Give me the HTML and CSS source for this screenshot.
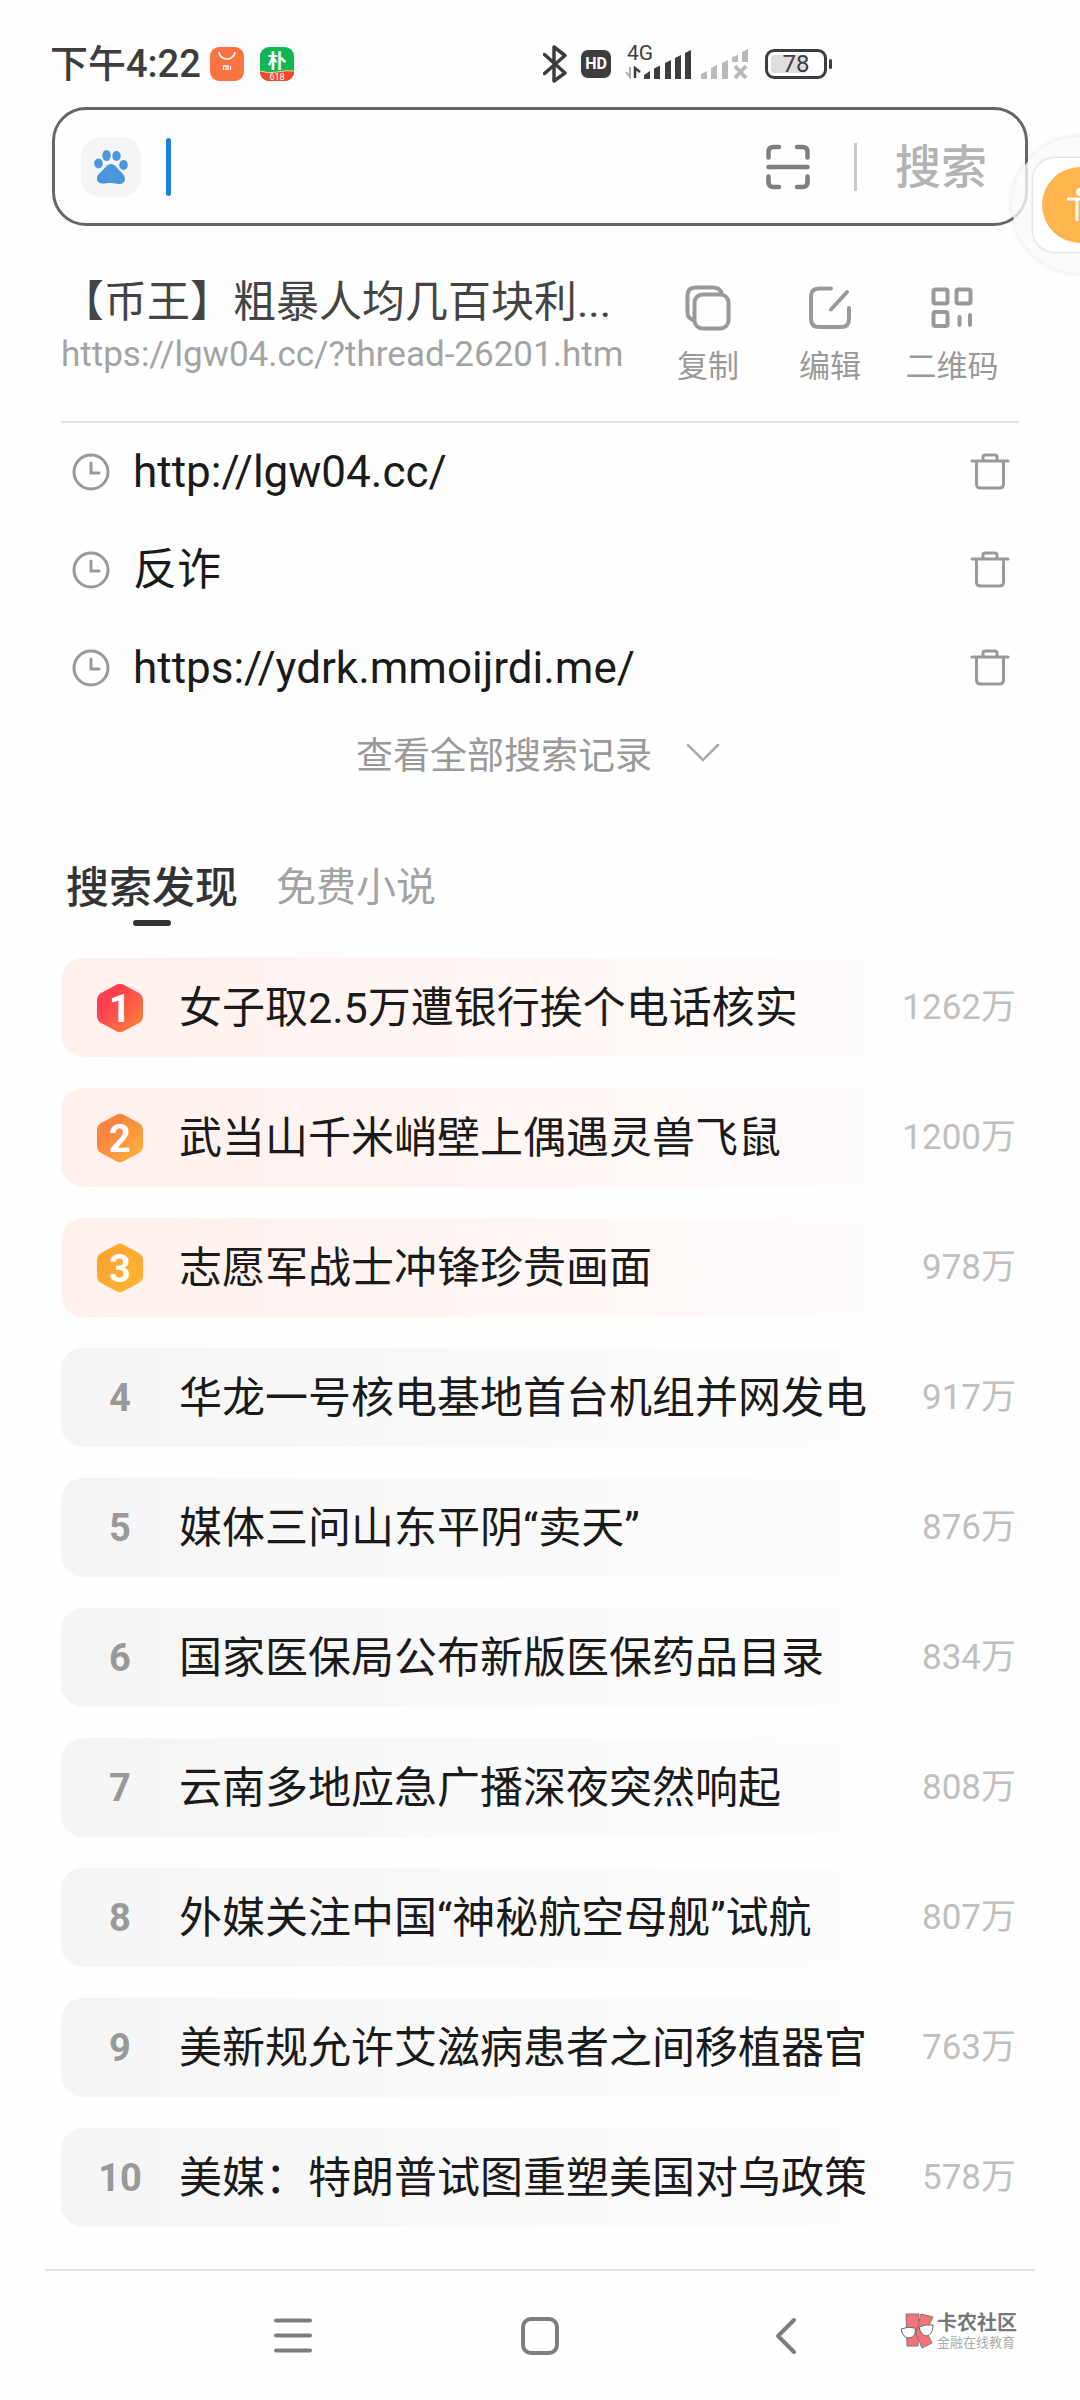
FILE: index.html
```html
<!DOCTYPE html>
<html lang="zh-CN">
<head>
  <meta charset="UTF-8" />
  <meta name="viewport" content="width=device-width, initial-scale=1.0"/>
  <title>搜索</title>
  <link rel="stylesheet" href="styles.css">
</head>
<body>
  <header class="status-bar">
    <span class="clock">下午4:22</span>
    <svg class="app-icon" viewBox="0 0 34 34">
      <rect width="34" height="34" rx="9" fill="#fb7340"/>
      <path d="M9 5a8 7 0 0 0 16 0" fill="none" stroke="#fff" stroke-width="1.6"/>
      <path d="M13.500 23v-4h4.500v4M16 20.500v2.500M20.500 19v4" fill="none" stroke="#fff" stroke-width="1.300"/>
    </svg>
    <svg class="app-icon" viewBox="0 0 34 34">
      <defs><clipPath id="appClip"><rect width="34" height="34" rx="9"/></clipPath></defs>
      <g clip-path="url(#appClip)">
        <rect width="34" height="34" fill="#0fb653"/>
        <path d="M0 24q8 3 17 1t17-1v10H0z" fill="#ee4a2b"/>
        <path d="M0 24q8 3 17 1t17-1" fill="none" stroke="#ffd98a" stroke-width="1"/>
      </g>
      <text class="app-char" x="17" y="21">朴</text>
      <text class="app-tag" x="17" y="33">618</text>
    </svg>
    <div class="status-icons">
      <svg width="24" height="38" viewBox="0 0 24 38">
        <path d="M1.500 9.500 22 28 11 36V2l11 8.500L1.500 28.500" fill="none" stroke="#3d3d3d" stroke-width="3.500" stroke-linejoin="round" stroke-linecap="round"/>
      </svg>
      <span class="hd">HD</span>
      <div class="signal">
        <span class="network">4G</span>
        <svg width="66" height="30" viewBox="0 0 66 30">
          <path d="M5 18v10L1 23" fill="none" stroke="#aaa" stroke-width="2"/>
          <path d="M10 29V19l5 4" fill="none" stroke="#3d3d3d" stroke-width="2.500"/>
          <path fill="#3d3d3d" d="M19 30v-4l6-4v8zM29 30V19.500l6-3V30zM40 30V14l6-3v19zM50 30V9l6-3v24zM60 30V4l6-3v29z"/>
        </svg>
      </div>
      <svg width="48" height="30" viewBox="0 0 48 30">
        <path fill="#b9b9b9" d="M0 30v-5l6-3v8zM10 30V19l6-3v14zM21 30V14l6-3v19zM31 13V8l6-2v7zM41 13V3l6-3v13z"/>
        <path d="M34 17l11 12M45 17 34 29" stroke="#b9b9b9" stroke-width="4"/>
      </svg>
      <div class="battery"><span>78</span></div>
    </div>
  </header>

  <main>
    <form class="search-box">
      <button type="button" class="engine" aria-label="百度">
        <svg width="34" height="34" viewBox="0 0 34 34" fill="#4a97db">
          <ellipse cx="4.500" cy="13.500" rx="4.300" ry="5"/>
          <ellipse cx="12.500" cy="5.500" rx="4.200" ry="5.500"/>
          <ellipse cx="22.500" cy="6" rx="4.200" ry="5"/>
          <ellipse cx="29.500" cy="15" rx="4.300" ry="5"/>
          <path d="M17 14c4 0 6 4 9 7 3 2.500 5 5 5 8s-2.500 5-6 5c-3 0-5-1-8-1s-5 .6-8 .6c-4 0-6-2-6-5.200 0-3 2-5 5-7.400C11 18 13 14 17 14z"/>
        </svg>
      </button>
      <span class="caret"></span>
      <input type="text" id="keyword" aria-label="搜索内容" />
      <button type="button" class="scan" aria-label="扫一扫">
        <svg width="44" height="46" viewBox="0 0 44 46" fill="none" stroke="#7d7d7d" stroke-width="4.500" stroke-linecap="round">
          <path d="M2.500 13.500V8q0-5 5-5H13M31 3h5.500q5 0 5 5v5.500M41.500 32.500V38q0 5-5 5H31M13 43H7.500q-5 0-5-5v-5.500M2.500 23h39"/>
        </svg>
      </button>
      <span class="separator"></span>
      <button type="submit" class="search-btn">搜索</button>
    </form>

    <section class="clip">
      <div class="clip-text">
        <div class="clip-title">【币王】粗暴人均几百块利...</div>
        <a class="clip-url" href="#">https://lgw04.cc/?thread-26201.htm</a>
      </div>
      <div class="clip-actions">
        <button type="button">
          <svg viewBox="0 0 46 46"><rect x="9.500" y="9.500" width="34" height="34" rx="8"/><path d="M8 35q-5.500-2-5.500-7.500V10.500q0-8 8-8H28q6 0 8.500 5"/></svg>
          复制
        </button>
        <button type="button">
          <svg viewBox="0 0 46 46"><path d="M24 3.500H12q-8 0-8 8V34q0 8 8 8h22q8 0 8-8V23M24 24.500 40 7"/></svg>
          编辑
        </button>
        <button type="button">
          <svg viewBox="0 0 46 46"><rect x="4.500" y="4.500" width="14" height="14" rx="2"/><rect x="27.500" y="4.500" width="14" height="14" rx="2"/><rect x="4.500" y="27" width="14" height="14" rx="2"/><path d="M30.500 32v8M41 30v10"/></svg>
          二维码
        </button>
      </div>
    </section>

    <ul class="history" id="history"></ul>

    <button type="button" class="show-all">
      查看全部搜索记录
      <svg width="34" height="20" viewBox="0 0 34 20" fill="none" stroke="#aaa" stroke-width="2.500" stroke-linecap="round"><path d="M2 2l15 15L32 2"/></svg>
    </button>

    <nav class="tabs">
      <a href="#" class="tab active">搜索发现</a>
      <a href="#" class="tab">免费小说</a>
    </nav>

    <ol class="hot-list" id="hotList"></ol>
  </main>

  <footer class="nav-bar">
    <button type="button" aria-label="菜单">
      <svg width="38" height="38" viewBox="0 0 38 38"><path d="M2 3.500h34M2 18.500h34M2 33.500h34"/></svg>
    </button>
    <button type="button" aria-label="主页">
      <svg width="38" height="38" viewBox="0 0 38 38"><rect x="2" y="2" width="34" height="34" rx="8"/></svg>
    </button>
    <button type="button" aria-label="返回">
      <svg width="38" height="38" viewBox="0 0 38 38"><path d="M26 3 10 19l16 16"/></svg>
    </button>
    <div class="watermark">
      <svg width="36" height="36" viewBox="0 0 36 36">
        <g fill="#f8727c" stroke="#777" stroke-width="1">
          <path d="M6 1h13l-1 32H7z"/>
          <path d="M21 1l12 3-7 14 6 12-10 5-6-15z"/>
        </g>
        <g fill="#fff" stroke="#666" stroke-width="1">
          <path d="M1 16q7-3 14-1 2 9-6 10-6 0-8-9z"/>
          <path d="M19 14q6-3 14-2 0 9-6 11-6 0-8-9z"/>
        </g>
      </svg>
      <div>
        <div class="wm-name">卡农社区</div>
        <div class="wm-sub">金融在线教育</div>
      </div>
    </div>
  </footer>

  <div class="float-dock">
    <button type="button" class="float-btn" aria-label="无障碍">
      <span class="float-card">
        <svg width="78" height="78" viewBox="0 0 78 78">
          <circle cx="39" cy="39" r="38" fill="#ffb44d"/>
          <circle cx="39" cy="26" r="4" fill="#fff"/>
          <path d="M26 33h26M36 33v22M42 33v22" fill="none" stroke="#fff" stroke-width="3"/>
        </svg>
      </span>
    </button>
  </div>

  <script>
    const history = ['http://lgw04.cc/', '反诈', 'https://ydrk.mmoijrdi.me/'];
    const hot = [
      ['女子取2.5万遭银行挨个电话核实', '1262万'],
      ['武当山千米峭壁上偶遇灵兽飞鼠', '1200万'],
      ['志愿军战士冲锋珍贵画面', '978万'],
      ['华龙一号核电基地首台机组并网发电', '917万'],
      ['媒体三问山东平阴“卖天”', '876万'],
      ['国家医保局公布新版医保药品目录', '834万'],
      ['云南多地应急广播深夜突然响起', '808万'],
      ['外媒关注中国“神秘航空母舰”试航', '807万'],
      ['美新规允许艾滋病患者之间移植器官', '763万'],
      ['美媒：特朗普试图重塑美国对乌政策', '578万']
    ];
    const badgeColors = [['#ff3f4d', '#f88a3c'], ['#f9853f', '#fcb43c'], ['#fda52f', '#fdb935']];

    document.getElementById('history').innerHTML = history.map(text => `
      <li>
        <svg width="38" height="38" viewBox="0 0 38 38"><circle cx="19" cy="19" r="17"/><path d="M19 10v10h8"/></svg>
        <a href="#">${text}</a>
        <button type="button" aria-label="删除">
          <svg width="40" height="38" viewBox="0 0 40 38"><path d="M2 8h36M13 7V4q0-2 2-2h10q2 0 2 2v3M6.500 9v22q0 4 4 4h19q4 0 4-4V9"/></svg>
        </button>
      </li>`).join('');

    document.getElementById('hotList').innerHTML = hot.map(([title, heat], i) => {
      const rank = i < 3
        ? `<svg class="rank" width="46" height="50" viewBox="0 0 46 50">
            <defs><linearGradient id="g${i}" x1="0" y1="0" x2="1" y2="1"><stop offset="0.3" stop-color="${badgeColors[i][0]}"/><stop offset="1" stop-color="${badgeColors[i][1]}"/></linearGradient></defs>
            <path d="M19 2q4-2.500 8 0l15 8q4 2.500 4 7v16q0 4.500-4 7l-15 8q-4 2.500-8 0L4 40q-4-2.500-4-7V17q0-4.500 4-7z" fill="url(#g${i})"/>
            <text x="23" y="39">${i + 1}</text>
          </svg>`
        : `<span class="rank">${i + 1}</span>`;
      return `<li class="${i < 3 ? 'top' : ''}">${rank}<a href="#">${title}</a><span class="heat">${heat}</span></li>`;
    }).join('');
  </script>
</body>
</html>
```

FILE: styles.css
```css
:root {
  --dark: #3d3d3d;
  --text: #1a1a1a;
  --gray: #999;
  --light-gray: #bfbfbf;
  --line: #e6e6e6;
}

* {
  box-sizing: border-box;
}

body {
  margin: 0;
  position: relative;
  background: #fefefe;
  color: var(--text);
  font-family: Roboto, "Noto Sans CJK SC", sans-serif;
  font-size: 43px;
}

button {
  border: none;
  padding: 0;
  background: none;
  font-family: inherit;
  cursor: pointer;
}

a {
  color: inherit;
  text-decoration: none;
}

svg {
  display: block;
  flex: none;
}

ul, ol {
  list-style: none;
  margin: 0;
  padding: 0;
}

/* status bar */
.status-bar {
  display: flex;
  align-items: center;
  height: 107px;
  padding: 20px 52px 0 50px;
  color: var(--dark);
}

.clock {
  font-size: 38px;
  font-weight: 500;
  line-height: 48px;
  margin-right: 9px;
}

.app-icon {
  width: 34px;
  height: 34px;
  margin-right: 16px;
}

.app-icon text {
  fill: #fff;
  text-anchor: middle;
}

.app-char {
  font-size: 19px;
  font-weight: 700;
}

.app-tag {
  font-size: 9px;
}

.status-icons {
  display: flex;
  align-items: center;
  margin-left: auto;
  margin-right: 201px;
}

.hd {
  width: 30px;
  height: 28px;
  margin: 0 14px;
  border-radius: 7px;
  background: var(--dark);
  color: #fff;
  font: 700 16px/28px Roboto, sans-serif;
  text-align: center;
}

.signal {
  position: relative;
  margin-right: 10px;
}

.network {
  position: absolute;
  left: 2px;
  top: -6px;
  font-size: 21px;
  line-height: 20px;
}

.battery {
  position: relative;
  width: 62px;
  height: 30px;
  margin-left: 16px;
  border: 3px solid var(--dark);
  border-radius: 9px;
  background: linear-gradient(to right, #dedede 70%, #fefefe 70%) content-box;
  padding: 3px;
}

.battery span {
  display: block;
  font-size: 24px;
  line-height: 18px;
  text-align: center;
}

.battery::after {
  content: "";
  position: absolute;
  right: -8px;
  top: 7px;
  width: 3px;
  height: 10px;
  border-radius: 2px;
  background: var(--dark);
}

/* search box */
.search-box {
  display: flex;
  align-items: center;
  height: 119px;
  margin: 0 52px;
  padding: 0 38px 0 26px;
  border: 3px solid #666;
  border-radius: 34px;
}

.engine {
  display: flex;
  align-items: center;
  justify-content: center;
  width: 60px;
  height: 60px;
  border-radius: 20px;
  background: #f5f5f5;
}

.caret {
  width: 5px;
  height: 58px;
  margin-left: 25px;
  border-radius: 3px;
  background: #1f80e0;
}

.search-box input {
  flex: 1;
  min-width: 0;
  border: none;
  outline: none;
  background: none;
  font: inherit;
}

.separator {
  width: 3px;
  height: 48px;
  margin: 0 38px 0 44px;
  background: #c8c8c8;
}

.search-btn {
  color: #b3b3b3;
  font-size: 46px;
  font-weight: 500;
  line-height: 60px;
}

/* copied link */
.clip {
  display: flex;
  justify-content: space-between;
  height: 197px;
  margin: 0 61px;
  padding-top: 46px;
  border-bottom: 2px solid var(--line);
}

.clip-text {
  min-width: 0;
  white-space: nowrap;
}

.clip-title {
  line-height: 60px;
  color: #444;
}

.clip-url {
  display: block;
  color: #a3a3a3;
  font-size: 35px;
  line-height: 46px;
}

.clip-actions {
  display: grid;
  grid-template-columns: repeat(3, 122px);
  margin-right: 6px;
}

.clip-actions button {
  display: flex;
  flex-direction: column;
  align-items: center;
  gap: 16px;
  padding-top: 13px;
  color: var(--gray);
  font-size: 31px;
  line-height: 40px;
}

.clip-actions svg {
  width: 46px;
  height: 46px;
  fill: none;
  stroke: var(--gray);
  stroke-width: 4;
  stroke-linecap: round;
}

/* history */
.history {
  margin: 0 70px 0 72px;
}

.history li {
  display: flex;
  align-items: center;
  height: 98px;
}

.history a {
  flex: 1;
  margin-left: 23px;
  font-size: 44px;
  line-height: 60px;
}

.history svg {
  fill: none;
  stroke: var(--gray);
  stroke-width: 3;
  stroke-linecap: round;
}

.show-all {
  display: flex;
  align-items: center;
  justify-content: center;
  gap: 34px;
  width: 100%;
  height: 72px;
  padding-right: 4px;
  color: var(--gray);
  font-size: 37px;
}

/* tabs */
.tabs {
  display: flex;
  align-items: center;
  gap: 38px;
  height: 68px;
  margin: 65px 66px 36px;
}

.tab {
  position: relative;
  color: #a3a3a3;
  font-size: 40px;
  line-height: 60px;
}

.tab.active {
  color: #333;
  font-size: 43px;
  font-weight: 500;
}

.tab.active::after {
  content: "";
  position: absolute;
  left: 50%;
  bottom: -8px;
  width: 38px;
  height: 6px;
  margin-left: -19px;
  border-radius: 3px;
  background: #333;
}

/* hot list */
.hot-list {
  display: grid;
  gap: 31px;
  margin: 0 61px;
}

.hot-list li {
  display: grid;
  grid-template-columns: 118px 1fr auto;
  align-items: center;
  height: 99px;
  padding-right: 3px;
  border-radius: 22px;
  background: linear-gradient(to right, #f5f5f5, #fefefe);
}

.hot-list li.top {
  background: linear-gradient(to right, #fff0ed, #fefefe);
}

.hot-list a {
  line-height: 60px;
  white-space: nowrap;
}

.rank {
  justify-self: center;
  color: var(--gray);
  font-size: 38px;
  font-weight: 700;
  line-height: 60px;
}

.rank text {
  fill: #fff;
  text-anchor: middle;
}

.heat {
  color: var(--light-gray);
  font-size: 35px;
  line-height: 60px;
}

/* bottom bar */
.nav-bar {
  position: relative;
  display: grid;
  grid-template-columns: repeat(3, 247px);
  justify-content: center;
  margin: 42px 45px 0;
  height: 131px;
  border-top: 2px solid var(--line);
}

.nav-bar button {
  display: flex;
  justify-content: center;
  align-items: center;
}

.nav-bar button svg {
  fill: none;
  stroke: #7d7d7d;
  stroke-width: 4;
  stroke-linecap: round;
  stroke-linejoin: round;
}

.watermark {
  position: absolute;
  right: 18px;
  top: 40px;
  display: flex;
  align-items: center;
  gap: 1px;
  white-space: nowrap;
}

.wm-name {
  color: #777;
  font-size: 20px;
  font-weight: 700;
  line-height: 24px;
}

.wm-sub {
  color: #aaa;
  font-size: 13px;
  line-height: 16px;
}

/* floating accessibility button, docked half off the right edge */
.float-dock {
  position: absolute;
  top: 131px;
  right: 0;
  width: 74px;
  height: 148px;
  padding: 6px;
  overflow: hidden;
}

.float-btn {
  display: flex;
  align-items: center;
  justify-content: center;
  width: 136px;
  height: 136px;
  border-radius: 50%;
  background: rgba(250, 250, 250, 0.8);
  box-shadow: 0 0 4px 2px rgba(0, 0, 0, 0.06);
}

.float-card {
  padding: 8px;
  border-radius: 22px;
  background: #fff;
  box-shadow: 0 0 2px 1px rgba(0, 0, 0, 0.12);
}
```
